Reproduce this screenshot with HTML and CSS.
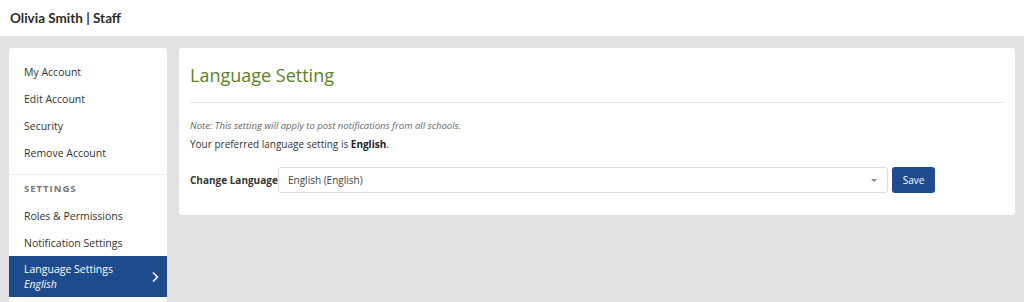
FILE: index.html
```html
<!DOCTYPE html>
<html>
<head>
<meta charset="utf-8">
<link rel="stylesheet" href="styles.css">
</head>
<body>
<header class="topbar">Olivia Smith | Staff</header>
<div class="page">
  <aside class="sidebar">
    <ul class="menu">
      <li class="item">My Account</li>
      <li class="item">Edit Account</li>
      <li class="item">Security</li>
      <li class="item">Remove Account</li>
    </ul>
    <div class="section-title">SETTINGS</div>
    <ul class="menu menu-settings">
      <li class="item">Roles &amp; Permissions</li>
      <li class="item">Notification Settings</li>
      <li class="item active">
        <div class="active-text">
          <span>Language Settings</span>
          <em>English</em>
        </div>
        <svg class="chev" width="8" height="12" viewBox="0 0 8 12"><path d="M2 1.5 L6.5 6 L2 10.5" fill="none" stroke="#fff" stroke-width="1.6"/></svg>
      </li>
    </ul>
  </aside>
  <main class="card">
    <h1 class="title">Language Setting</h1>
    <hr class="rule">
    <p class="note">Note: This setting will apply to post notifications from all schools.</p>
    <p class="pref">Your preferred language setting is <b>English</b>.</p>
    <div class="form-row">
      <label class="label">Change Language</label>
      <div class="select">
        <span>English (English)</span>
        <span class="caret"></span>
      </div>
      <button class="btn">Save</button>
    </div>
  </main>
</div>
</body>
</html>
```
FILE: styles.css
```css
* { box-sizing: border-box; }
html, body { margin: 0; padding: 0; }
body {
  font-family: "Open Sans", "Liberation Sans", sans-serif;
  color: #333;
  background: #e2e2e2;
  height: 302px;
  overflow: hidden;
}
.topbar {
  height: 36px;
  background: #fff;
  padding: 0 10px;
  display: flex;
  align-items: center;
  font-family: Lato, "Open Sans", sans-serif;
  font-weight: 700;
  font-size: 13.5px;
  color: #2b2b2b;
}
.page {
  display: flex;
  align-items: flex-start;
  gap: 12px;
  padding: 12px 9px 0 9px;
}
.sidebar {
  width: 158px;
  flex: none;
  background: #fff;
  border-radius: 3px 3px 0 0;
  height: 254px;
}
.menu {
  list-style: none;
  margin: 0;
  padding: 10px 0 8px;
}
.menu-settings { padding: 0; }
.item {
  height: 27px;
  display: flex;
  align-items: center;
  padding-left: 15px;
  font-size: 10.5px;
  color: #333;
}
.section-title {
  border-top: 1px solid #ececec;
  height: 28px;
  display: flex;
  align-items: center;
  padding-left: 15px;
  font-size: 9.5px;
  font-weight: 700;
  letter-spacing: 1px;
  color: #777;
}
.item.active {
  background: #1e4b8e;
  color: #fff;
  height: 41px;
  justify-content: space-between;
  padding-right: 8px;
}
.active-text { display: flex; flex-direction: column; line-height: 15px; }
.active-text em { font-style: italic; }
.card {
  flex: 1;
  background: #fff;
  border-radius: 3px;
  padding: 16px 11px 23px;
  height: 167px;
}
.title {
  margin: 0;
  font-weight: 400;
  font-size: 18px;
  color: #5d7f2a;
  line-height: 22px;
}
.rule {
  border: 0;
  border-top: 1px solid #e6e6e6;
  margin: 16px 0 0;
}
.note {
  margin: 17px 0 0;
  font-size: 9.5px;
  font-style: italic;
  color: #666;
  line-height: 12px;
}
.pref {
  margin: 5px 0 0;
  font-size: 10px;
  line-height: 14px;
  color: #333;
}
.pref b { color: #222; }
.form-row {
  display: flex;
  align-items: center;
  margin-top: 16px;
}
.label {
  font-weight: 700;
  font-size: 10px;
  color: #333;
  width: 88px;
  flex: none;
}
.select {
  width: 610px;
  height: 26px;
  border: 1px solid #dcdcdc;
  border-radius: 3px;
  display: flex;
  align-items: center;
  justify-content: space-between;
  padding: 0 10px 0 9px;
  font-size: 10px;
  color: #444;
}
.caret {
  width: 0; height: 0;
  border-left: 3px solid transparent;
  border-right: 3px solid transparent;
  border-top: 3px solid #888;
}
.btn {
  margin-left: 4px;
  height: 26px;
  width: 43px;
  background: #1e4b8e;
  color: #fff;
  border: 0;
  border-radius: 3px;
  font-family: inherit;
  font-size: 10px;
  padding: 0;
}
```
